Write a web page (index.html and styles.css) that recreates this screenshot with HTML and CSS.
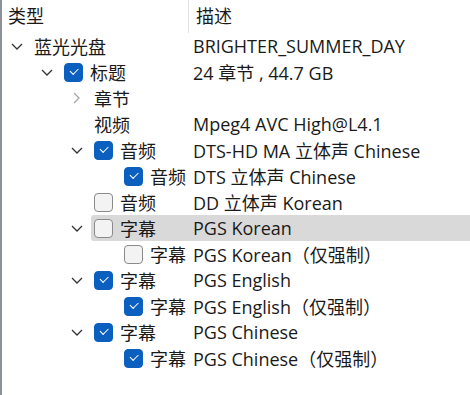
FILE: index.html
```html
<!DOCTYPE html>
<html>
<head>
<meta charset="utf-8">
<link rel="stylesheet" href="styles.css">
</head>
<body>
<div class="tree">
  <div class="header">
    <div class="hcol first">类型</div>
    <div class="hcol">描述</div>
  </div>
  <div class="rows">
    <div class="row l0">
      <span class="twist"><svg viewBox="0 0 12 7" class="down"><path d="M1 1 L6 6 L11 1"/></svg></span>
      <div class="item"><span class="name">蓝光光盘</span><span class="desc">BRIGHTER_SUMMER_DAY</span></div>
    </div>
    <div class="row l1">
      <span class="twist"><svg viewBox="0 0 12 7" class="down"><path d="M1 1 L6 6 L11 1"/></svg></span>
      <div class="item"><span class="name"><span class="cb on"></span>标题</span><span class="desc">24 章节 , 44.7 GB</span></div>
    </div>
    <div class="row l2">
      <span class="twist"><svg viewBox="0 0 7 12" class="right"><path d="M1 1 L6 6 L1 11"/></svg></span>
      <div class="item"><span class="name">章节</span><span class="desc"></span></div>
    </div>
    <div class="row l2">
      <span class="twist"></span>
      <div class="item"><span class="name">视频</span><span class="desc">Mpeg4 AVC High@L4.1</span></div>
    </div>
    <div class="row l2">
      <span class="twist"><svg viewBox="0 0 12 7" class="down"><path d="M1 1 L6 6 L11 1"/></svg></span>
      <div class="item"><span class="name"><span class="cb on"></span>音频</span><span class="desc">DTS-HD MA 立体声 Chinese</span></div>
    </div>
    <div class="row l3">
      <span class="twist"></span>
      <div class="item"><span class="name"><span class="cb on"></span>音频</span><span class="desc">DTS 立体声 Chinese</span></div>
    </div>
    <div class="row l2">
      <span class="twist"></span>
      <div class="item"><span class="name"><span class="cb"></span>音频</span><span class="desc">DD 立体声 Korean</span></div>
    </div>
    <div class="row l2 sel">
      <span class="twist"><svg viewBox="0 0 12 7" class="down"><path d="M1 1 L6 6 L11 1"/></svg></span>
      <div class="item"><span class="name"><span class="cb"></span>字幕</span><span class="desc">PGS Korean</span></div>
    </div>
    <div class="row l3">
      <span class="twist"></span>
      <div class="item"><span class="name"><span class="cb"></span>字幕</span><span class="desc">PGS Korean（仅强制）</span></div>
    </div>
    <div class="row l2">
      <span class="twist"><svg viewBox="0 0 12 7" class="down"><path d="M1 1 L6 6 L11 1"/></svg></span>
      <div class="item"><span class="name"><span class="cb on"></span>字幕</span><span class="desc">PGS English</span></div>
    </div>
    <div class="row l3">
      <span class="twist"></span>
      <div class="item"><span class="name"><span class="cb on"></span>字幕</span><span class="desc">PGS English（仅强制）</span></div>
    </div>
    <div class="row l2">
      <span class="twist"><svg viewBox="0 0 12 7" class="down"><path d="M1 1 L6 6 L11 1"/></svg></span>
      <div class="item"><span class="name"><span class="cb on"></span>字幕</span><span class="desc">PGS Chinese</span></div>
    </div>
    <div class="row l3">
      <span class="twist"></span>
      <div class="item"><span class="name"><span class="cb on"></span>字幕</span><span class="desc">PGS Chinese（仅强制）</span></div>
    </div>
  </div>
</div>
</body>
</html>
```
FILE: styles.css
```css
html, body {
  margin: 0;
  padding: 0;
  background: #ffffff;
}
body {
  font-family: "Open Sans", "Noto Sans CJK SC", sans-serif;
  font-size: 18px;
  color: #1a1a1a;
}
.tree {
  width: 470px;
  height: 395px;
  box-sizing: border-box;
  border-left: 2px solid #8b9099;
  overflow: hidden;
}
.header {
  display: flex;
  height: 33px;
}
.hcol {
  display: flex;
  align-items: center;
  height: 30px;
  padding-left: 7px;
}
.hcol.first {
  width: 187px;
  padding-left: 6px;
  border-right: 1px solid #e3e3e3;
  height: 33px;
  padding-bottom: 3px;
  box-sizing: border-box;
}
.row {
  display: flex;
  height: 26px;
  align-items: stretch;
}
.l0 { padding-left: 2px; }
.l1 { padding-left: 32px; }
.l2 { padding-left: 62px; }
.l3 { padding-left: 92px; }
.twist {
  width: 27px;
  flex: none;
  display: flex;
  align-items: center;
  padding-left: 7px;
  box-sizing: border-box;
}
.twist svg { fill: none; stroke-width: 1.3; }
.twist .down { width: 12px; height: 7px; stroke: #333; }
.twist .right { width: 7px; height: 12px; stroke: #a6a6a6; margin-left: 2px; }
.item {
  flex: 1;
  display: flex;
  align-items: center;
  padding-left: 3px;
  border-radius: 3px 0 0 3px;
}
.sel .item { background: #d9d9d9; }
.name {
  display: flex;
  align-items: center;
  flex: none;
}
.l0 .name { width: 159px; }
.l1 .name { width: 129px; }
.l2 .name { width: 99px; }
.l3 .name { width: 69px; }
.desc { white-space: nowrap; }
.cb {
  width: 19px;
  height: 19px;
  box-sizing: border-box;
  border: 1px solid #8a8a8a;
  background: #f3f3f3;
  border-radius: 4px;
  margin-right: 7px;
  flex: none;
  position: relative;
}
.cb.on {
  background: #0a5fbf;
  border-color: #0a5fbf;
}
.cb.on::after {
  content: "";
  position: absolute;
  left: 5px;
  top: 4px;
  width: 7px;
  height: 3.5px;
  border-left: 1.3px solid #fff;
  border-bottom: 1.3px solid #fff;
  transform: rotate(-45deg);
}
```
